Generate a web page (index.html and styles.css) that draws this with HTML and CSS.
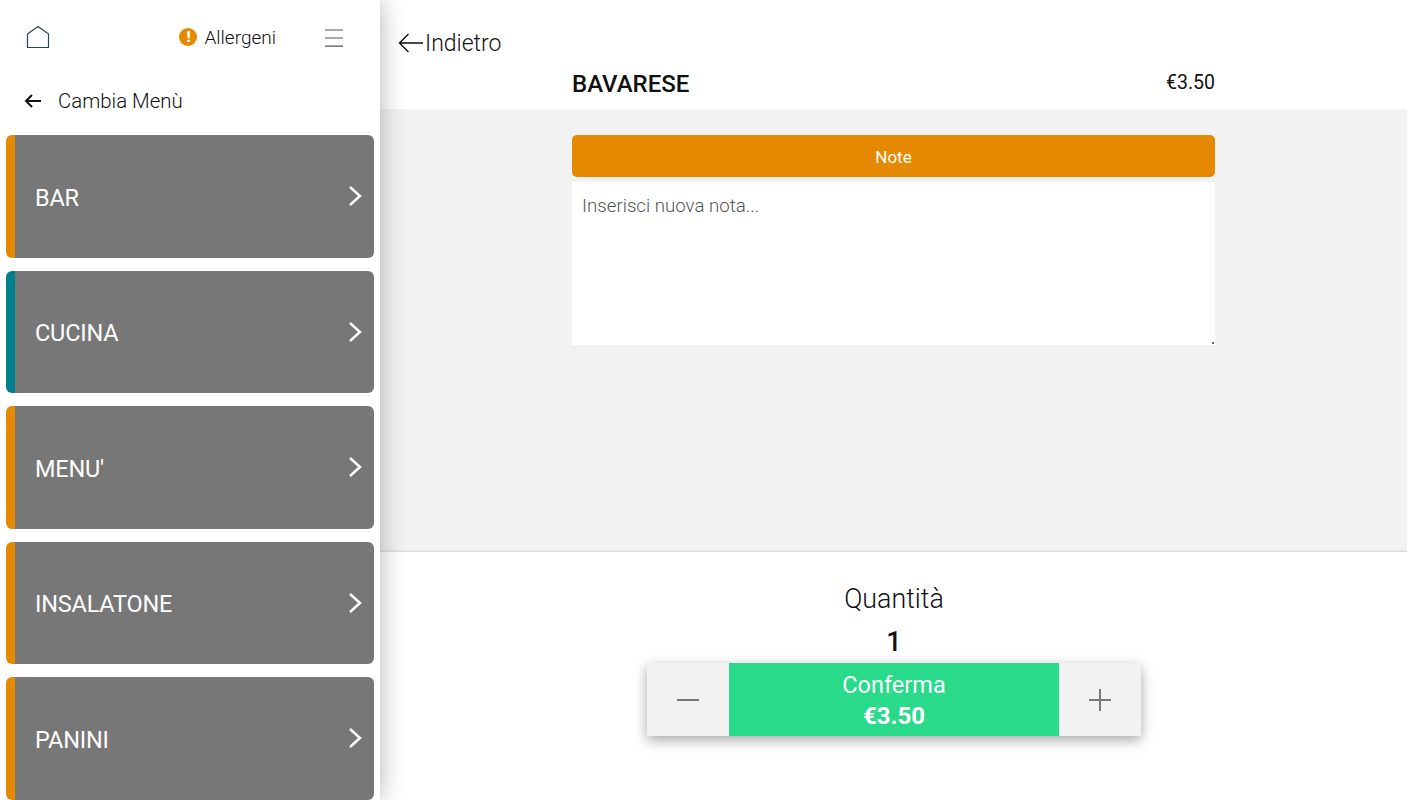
FILE: index.html
```html
<!DOCTYPE html>
<html>
<head>
    <title>Bavarese</title>
    <link rel="stylesheet" href="styles.css">
</head>
<body>
    <div class="sidebar">
        <div class="top-bar">
            <svg class="home-icon" width="25" height="24" viewBox="0 0 25 24" fill="none">
                <path d="M2.5 22.5V9L13 1.5L23.5 9V22.5Z" stroke="#24485a" stroke-width="1.2" stroke-linejoin="round"/>
            </svg>
            <div class="allergens">
                <span class="alert-dot">!</span>
                <span>Allergeni</span>
            </div>
            <svg class="burger" width="18" height="18" viewBox="0 0 18 18" fill="none" stroke="#555" stroke-width="1.2">
                <path d="M0 1H18M0 9H18M0 17.2H18"/>
            </svg>
        </div>
        <div class="change-menu">
            <svg width="18" height="16" viewBox="0 0 18 16" fill="none" stroke="#111" stroke-width="2">
                <path d="M17 8H2M8 2L2 8L8 14"/>
            </svg>
            <span>Cambia Menù</span>
        </div>
        <div class="category-list">
            <div class="category orange"><span class="category-name">BAR</span><svg class="chevron" width="14" height="22" viewBox="0 0 14 22"><path d="M2 2L12 11L2 20"/></svg></div>
            <div class="category teal"><span class="category-name">CUCINA</span><svg class="chevron" width="14" height="22" viewBox="0 0 14 22"><path d="M2 2L12 11L2 20"/></svg></div>
            <div class="category orange"><span class="category-name">MENU'</span><svg class="chevron" width="14" height="22" viewBox="0 0 14 22"><path d="M2 2L12 11L2 20"/></svg></div>
            <div class="category orange"><span class="category-name">INSALATONE</span><svg class="chevron" width="14" height="22" viewBox="0 0 14 22"><path d="M2 2L12 11L2 20"/></svg></div>
            <div class="category orange"><span class="category-name">PANINI</span><svg class="chevron" width="14" height="22" viewBox="0 0 14 22"><path d="M2 2L12 11L2 20"/></svg></div>
        </div>
    </div>
    <div class="main">
        <div class="main-header">
            <div class="back-link">
                <svg width="25" height="20" viewBox="0 0 25 20" fill="none" stroke="#111" stroke-width="1.4">
                    <path d="M25 10H1.5M10.5 1L1.5 10L10.5 19"/>
                </svg>
                <span>Indietro</span>
            </div>
            <div class="product-row">
                <span class="product-name">BAVARESE</span>
                <span class="product-price">€3.50</span>
            </div>
        </div>
        <div class="notes-area">
            <div class="notes-column">
                <div class="note-btn">Note</div>
                <textarea class="note-input" placeholder="Inserisci nuova nota..."></textarea>
            </div>
        </div>
        <div class="footer">
            <div class="qty-label">Quantità</div>
            <div class="qty-value">1</div>
            <div class="qty-bar">
                <div class="qty-btn">
                    <svg width="24" height="24" viewBox="0 0 24 24" stroke="#777" stroke-width="2"><path d="M1 12H23"/></svg>
                </div>
                <div class="confirm">
                    <span class="confirm-label">Conferma</span>
                    <span class="confirm-price">€3.50</span>
                </div>
                <div class="qty-btn">
                    <svg width="24" height="24" viewBox="0 0 24 24" stroke="#777" stroke-width="2"><path d="M1 12H23M12 1V23"/></svg>
                </div>
            </div>
        </div>
    </div>
</body>
</html>
```

FILE: styles.css
```css
* {
    box-sizing: border-box;
}
body {
    margin: 0;
    height: 100vh;
    overflow: hidden;
    display: flex;
    font-family: Roboto, "Open Sans", sans-serif;
    color: #111;
    background-color: #fff;
}
.sidebar {
    width: 380px;
    flex: none;
    height: 100vh;
    overflow: hidden;
    padding: 0 6px;
    background-color: #fff;
    box-shadow: 0 0 24px rgba(0, 0, 0, 0.3);
    position: relative;
    z-index: 1;
}
.top-bar {
    height: 75px;
    display: flex;
    align-items: center;
    padding: 0 31px 0 19px;
}
.home-icon {
    flex: none;
    margin-top: -1px;
}
.allergens {
    margin-left: auto;
    margin-right: 49px;
    display: flex;
    align-items: center;
    gap: 7px;
    font-size: 19px;
    font-weight: 300;
}
.alert-dot {
    width: 18px;
    height: 18px;
    margin-top: -2px;
    border-radius: 50%;
    background-color: #e58900;
    color: #fff;
    font-size: 15px;
    font-weight: 900;
    line-height: 18px;
    text-align: center;
}
.change-menu {
    height: 52px;
    display: flex;
    align-items: center;
    gap: 16px;
    padding-left: 18px;
    font-size: 20.4px;
    font-weight: 300;
}
.category-list {
    margin-top: 8px;
    display: flex;
    flex-direction: column;
    gap: 13px;
}
.category {
    height: 122.5px;
    flex: none;
    display: flex;
    align-items: center;
    justify-content: space-between;
    padding: 0 12px 0 20px;
    border-radius: 6px;
    background-color: #777;
    color: #fff;
    font-size: 23.5px;
    letter-spacing: -0.2px;
}
.category-name {
    margin-top: 3px;
}
.category.orange {
    border-left: 9px solid #e58900;
}
.category.teal {
    border-left: 9px solid #00808c;
}
.chevron {
    fill: none;
    stroke: #fff;
    stroke-width: 2.4;
}
.main {
    flex: 1;
    height: 100vh;
    display: flex;
    flex-direction: column;
}
.main-header {
    height: 109px;
    flex: none;
    padding-top: 33px;
}
.back-link {
    margin-left: 18px;
    display: flex;
    align-items: center;
    gap: 2px;
    height: 20px;
    font-size: 23px;
    font-weight: 300;
}
.product-row {
    width: 643px;
    margin: 17px 0 0 192px;
    display: flex;
    align-items: center;
    justify-content: space-between;
}
.product-name {
    font-size: 24px;
    font-weight: 500;
}
.product-price {
    font-size: 19.5px;
    margin-top: -4px;
}
.notes-area {
    height: 442px;
    flex: none;
    padding: 26px 0 0 192px;
    background-color: #f2f2f2;
}
.notes-column {
    width: 643px;
    display: flex;
    flex-direction: column;
    gap: 5px;
}
.note-btn {
    height: 42px;
    padding-top: 1px;
    display: flex;
    align-items: center;
    justify-content: center;
    border-radius: 5px;
    background-color: #e58900;
    color: #fff;
    font-size: 17px;
}
.note-input {
    display: block;
    width: 100%;
    height: 163px;
    padding: 13px 10px;
    border: none;
    outline: none;
    border-radius: 0;
    resize: none;
    font-family: inherit;
    font-size: 18.7px;
    font-weight: 300;
    color: #111;
    background: #fff linear-gradient(#666, #666) no-repeat right 1px bottom 1px / 2px 2px;
}
.note-input::placeholder {
    color: #555;
}
.footer {
    flex: 1;
    display: flex;
    flex-direction: column;
    align-items: center;
    border-top: 1px solid #ddd;
    box-shadow: 0 -1px 2px rgba(0, 0, 0, 0.05);
    padding-top: 31px;
    padding-left: 1px;
}
.qty-label {
    font-size: 26.8px;
    font-weight: 300;
    line-height: 32px;
}
.qty-value {
    margin-top: 11px;
    font-size: 27px;
    font-weight: 500;
    line-height: 32px;
}
.qty-bar {
    margin-top: 5px;
    width: 494px;
    height: 73px;
    display: flex;
    box-shadow: 0 4px 12px rgba(0, 0, 0, 0.35);
}
.qty-btn {
    width: 82px;
    flex: none;
    display: flex;
    align-items: center;
    justify-content: center;
    background-color: #f2f2f2;
}
.confirm {
    flex: 1;
    display: flex;
    flex-direction: column;
    align-items: center;
    justify-content: center;
    background-color: #28da8a;
    color: #fff;
}
.confirm-label {
    font-size: 23.5px;
    line-height: 32px;
}
.confirm-price {
    font-size: 24px;
    font-weight: 700;
    line-height: 30px;
}
```
